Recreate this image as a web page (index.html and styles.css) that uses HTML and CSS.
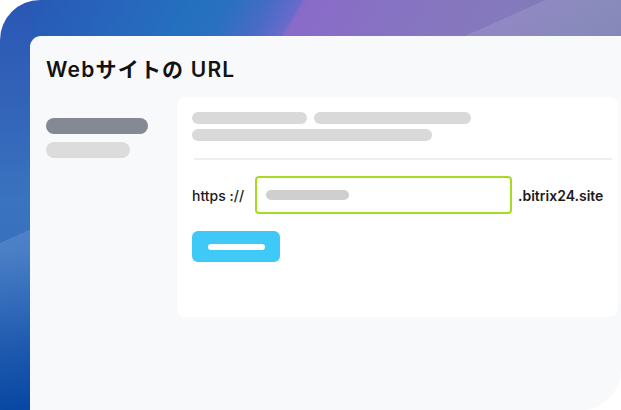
FILE: index.html
```html
<!DOCTYPE html>
<html lang="ja">
<head>
<meta charset="utf-8">
<title>Webサイトの URL</title>
<link rel="stylesheet" href="styles.css">
</head>
<body>
<div class="frame">
  <div class="panel">
    <h1 class="title">Webサイトの URL</h1>
    <div class="content">
      <aside class="side">
        <span class="bar bar-dark"></span>
        <span class="bar bar-light"></span>
      </aside>
      <section class="card">
        <div class="skel-row">
          <span class="sk sk1"></span>
          <span class="sk sk2"></span>
        </div>
        <div class="skel-row row2">
          <span class="sk sk3"></span>
        </div>
        <div class="divider"></div>
        <div class="url-row">
          <span class="proto">https ://</span>
          <div class="input"><span class="input-ph"></span></div>
          <span class="domain">.bitrix24.site</span>
        </div>
        <div class="btn"><span class="btn-bar"></span></div>
      </section>
    </div>
  </div>
</div>
</body>
</html>
```

FILE: styles.css
```css
html, body {
  margin: 0;
  padding: 0;
  background: #ffffff;
}
body {
  width: 621px;
  height: 410px;
  overflow: hidden;
  font-family: "Inter", "Noto Sans CJK JP", sans-serif;
}
.frame {
  box-sizing: border-box;
  width: 621px;
  height: 410px;
  padding: 36px 0 0 30px;
  border-radius: 40px 0 52px 0;
  display: flex;
  background:
    linear-gradient(156deg, rgba(255,255,255,0) 222px, rgba(255,255,255,0.11) 222px, rgba(255,255,255,0.05) 300px, rgba(255,255,255,0) 380px),
    linear-gradient(180deg, #2a57b5 0px, #3263b8 100px, #3a73c0 200px, #3771bf 250px, #2562b6 300px, #1553ab 350px, #0847a3 410px) left top / 31px 100% no-repeat,
    linear-gradient(121deg, #2855b4 0px, #2766bc 110px, #2470bf 170px, #2a70c0 200px, #4a6bc6 235px, #6a6aca 259px, #8a6ac9 262px, #8772c3 330px, #8578bd 420px, #7e80b6 520px, #8078b4 700px);
}
.panel {
  flex: 1;
  background: #f8f9fb;
  border-radius: 11px 0 40px 0;
  padding: 0 3px 0 16px;
  display: flex;
  flex-direction: column;
}
.title {
  margin: 0;
  padding-top: 22px;
  font-size: 21px;
  line-height: 24px;
  font-weight: 600;
  color: #121212;
  letter-spacing: 1.2px;
}
.content {
  margin-top: 15px;
  display: grid;
  grid-template-columns: 131px 1fr;
}
.side {
  padding-top: 21px;
  display: flex;
  flex-direction: column;
  gap: 8px;
}
.bar {
  display: block;
  height: 16px;
  border-radius: 8px;
}
.bar-dark {
  width: 102px;
  background: #848993;
}
.bar-light {
  width: 84px;
  background: #dcdcdc;
}
.card {
  box-sizing: border-box;
  height: 220px;
  background: #ffffff;
  border-radius: 8px;
  padding: 15px 15px 0 15px;
}
.skel-row {
  display: flex;
  gap: 7px;
}
.row2 {
  margin-top: 5px;
}
.sk {
  display: block;
  height: 12px;
  border-radius: 6px;
  background: #d9d9d9;
}
.sk1 { width: 115px; }
.sk2 { width: 157px; }
.sk3 { width: 240px; }
.divider {
  margin: 17px -9px 0 2px;
  height: 2px;
  background: #eeeeee;
}
.url-row {
  margin-top: 16px;
  display: flex;
  align-items: center;
}
.proto {
  font-size: 14px;
  font-weight: 500;
  color: #1b1b1b;
  width: 63px;
}
.input {
  box-sizing: border-box;
  width: 257px;
  height: 38px;
  border: 2px solid #a6dc1f;
  border-radius: 4px;
  padding-left: 9px;
  display: flex;
  align-items: center;
}
.input-ph {
  display: block;
  width: 83px;
  height: 10px;
  border-radius: 5px;
  background: #cfcfcf;
}
.domain {
  margin-left: 6px;
  font-size: 14px;
  font-weight: 600;
  color: #1b1b1b;
}
.btn {
  margin-top: 17px;
  width: 88px;
  height: 31px;
  border-radius: 6px;
  background: #3ec9f6;
  display: flex;
  align-items: center;
  justify-content: center;
}
.btn-bar {
  display: block;
  width: 57px;
  height: 6px;
  border-radius: 3px;
  background: #ffffff;
}
```
